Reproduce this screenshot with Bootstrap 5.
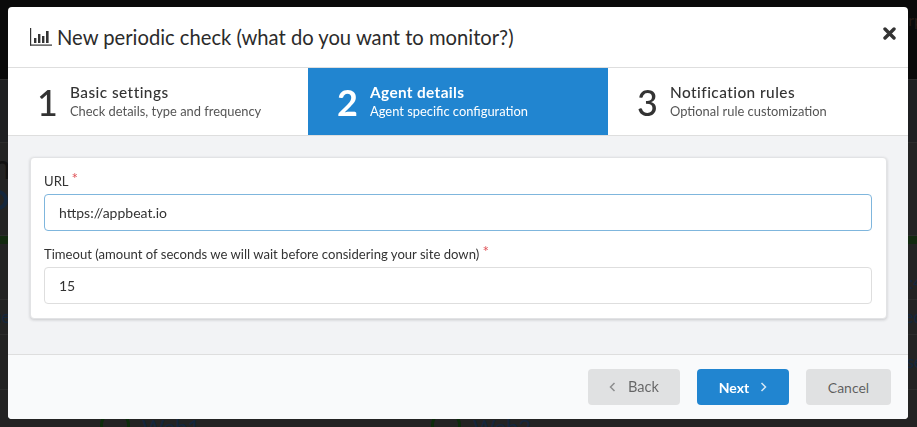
<!DOCTYPE html>
<html lang="en">
<head>
  <meta charset="UTF-8" />
  <meta name="viewport" content="width=device-width, initial-scale=1" />
  <title>New periodic check</title>
  <link href="https://cdn.jsdelivr.net/npm/bootstrap@5.3.0/dist/css/bootstrap.min.css" rel="stylesheet" />
  <style>
    html, body {
      height: 100%;
      overflow: hidden;
    }
    body {
      background-color: #232323;
      font-family: Lato, "Liberation Sans", sans-serif;
      color: #333;
    }
    /* dimmed page behind the dialog */
    .bg-page {
      height: 427px;
      overflow: hidden;
      color: #14263c;
    }
    .bg-band {
      display: flex;
      justify-content: space-between;
      align-items: center;
      border-bottom: 1px solid #2c2c2c;
      overflow: hidden;
      white-space: nowrap;
      font-size: 17px;
    }
    .bg-band span:first-child { margin-left: -8px; }
    .bg-band span:last-child { margin-right: -6px; }
    .bg-top { height: 80px; background: #0a0a0a; color: #241a16; align-items: flex-start; padding-top: 8px; justify-content: flex-end; font-size: 16px; }
    .bg-sub { height: 63px; background: #1f2022; }
    .bg-title { height: 93px; flex-direction: column; align-items: flex-start; justify-content: flex-start; }
    .bg-title span { font-size: 34px; line-height: 46px; color: #111; margin-left: -10px; }
    .bg-arc { width: 20px; height: 20px; border: 4px solid #14263c; border-radius: 50%; margin: 1px 0 0 -12px; }
    .bg-green { height: 8px; background: #12290f; border: 0; }
    .bg-a { height: 56px; align-items: flex-end; padding-bottom: 4px; }
    .bg-b { height: 35px; }
    .bg-c { height: 55px; justify-content: flex-end; }
    .bg-hosts { justify-content: flex-start; align-items: flex-start; padding: 20px 0 0 100px; font-size: 22px; border: 0; }
    .bg-hosts span:first-child { margin-left: 0; }
    .bg-hosts span:last-child { margin-right: 0; }
    .bg-host { display: flex; gap: 12px; width: 331px; }
    .bg-ring { width: 30px; height: 30px; border: 3px solid #0d2c0b; border-radius: 50%; flex: none; }

    /* dialog */
    .check-modal {
      position: fixed;
      top: 7px;
      left: 8px;
      width: 900px;
      height: 412px;
      display: flex;
      flex-direction: column;
      background: #fff;
      border-radius: 4px;
      overflow: hidden;
    }
    .check-head {
      height: 61px;
      flex: none;
      display: flex;
      align-items: center;
      justify-content: space-between;
      padding: 0 12px 0 21px;
      border-bottom: 1px solid #dedede;
    }
    .check-title {
      display: flex;
      align-items: center;
      gap: 4px;
      margin: 0;
      font-size: 20.2px;
      font-weight: 400;
      color: #2b2b2b;
      line-height: 1;
    }
    .check-close {
      border: 0;
      background: none;
      padding: 0;
      margin-top: -8px;
      line-height: 0;
    }
    .steps {
      height: 68px;
      flex: none;
      display: flex;
      border-bottom: 1px solid #dedede;
    }
    .step-item {
      width: 300px;
      display: flex;
      align-items: center;
      gap: 13px;
      padding-left: 29px;
      color: #333;
    }
    .step-item + .step-item { border-left: 1px solid #dedede; }
    .step-item.is-active {
      background: #2185d0;
      color: #fff;
      border-left-color: #2185d0;
    }
    .step-item.is-active + .step-item { border-left: 0; }
    .step-num {
      font-size: 36px;
      line-height: 1;
      width: 20px;
      text-align: center;
      font-weight: 500;
    }
    .step-name {
      font-size: 15.4px;
      line-height: 19px;
      font-weight: 500;
      letter-spacing: .45px;
    }
    .step-desc {
      font-size: 12.9px;
      line-height: 18px;
      color: #555;
    }
    .is-active .step-num { font-weight: 700; margin-left: -1px; margin-right: 1px; }
    .is-active .step-name { font-weight: 700; letter-spacing: .35px; margin-left: -1px; }
    .is-active .step-desc { color: #fff; margin-left: -1px; }
    .check-body {
      flex: 1;
      background: #f2f3f5;
      padding: 21px 21px 0 22px;
    }
    .check-card {
      height: 162px;
      background: #fff;
      border: 1px solid #e2e3e5;
      border-radius: 4px;
      box-shadow: 0 1px 3px rgba(34,36,38,.2);
      padding: 15px 14px 0 13px;
    }
    .check-label {
      display: block;
      font-size: 13.1px;
      line-height: 17px;
      margin-bottom: 4px;
      color: #333;
    }
    .req {
      color: #e0555a;
      font-size: 15.5px;
      vertical-align: top;
      line-height: 11px;
    }
    .check-input {
      height: 37px;
      padding: 0 14px;
      font-size: 14px;
      font-family: inherit;
      color: #333;
      border: 1px solid #dedede;
      border-radius: 4px;
      box-shadow: none;
      margin-bottom: 15px;
    }
    .check-input.is-focus { border-color: #7fb6dd; }
    .check-foot {
      height: 65px;
      flex: none;
      display: flex;
      justify-content: flex-end;
      align-items: center;
      gap: 17px;
      padding: 0 17px 0 0;
      background: #f9fafb;
      border-top: 1px solid #dedede;
    }
    .foot-btn {
      height: 36px;
      display: flex;
      align-items: center;
      justify-content: center;
      gap: 10px;
      padding: 0;
      border: 0;
      border-radius: 4px;
      font-size: 14px;
      font-weight: 700;
      font-family: inherit;
    }
    .foot-back { width: 92px; background: #e0e1e2; color: rgba(0,0,0,.55); font-weight: 400; font-size: 14.6px; gap: 12px; }
    .foot-next { width: 92px; background: #2185d0; color: #fff; gap: 11px; }
    .foot-cancel { width: 85px; background: #e0e1e2; color: rgba(0,0,0,.6); font-weight: 400; }
  </style>
</head>
<body>

  <div class="bg-page" aria-hidden="true">
    <div class="bg-band bg-top"><span>rp</span></div>
    <div class="bg-band bg-sub"></div>
    <div class="bg-band bg-title"><span>nt</span><div class="bg-arc"></div></div>
    <div class="bg-band bg-green"></div>
    <div class="bg-band bg-a"><span></span><span>2:4</span></div>
    <div class="bg-band bg-b"><span>ue</span><span>ed</span></div>
    <div class="bg-band bg-c"><span>se</span></div>
    <div class="bg-band bg-hosts">
      <div class="bg-host"><div class="bg-ring"></div><span>Web1</span></div>
      <div class="bg-host"><div class="bg-ring"></div><span>Web2</span></div>
    </div>
  </div>

  <div class="check-modal">
    <div class="check-head">
      <h5 class="check-title">
        <svg width="24" height="18" viewBox="0 0 24 18" fill="#333">
          <rect x="1" y="0" width="1.2" height="17.5"/>
          <rect x="1" y="16.5" width="22" height="1.2"/>
          <rect x="5" y="10" width="2.4" height="5"/>
          <rect x="9" y="6" width="2.4" height="9"/>
          <rect x="13" y="8" width="2.4" height="7"/>
          <rect x="17" y="3" width="2.6" height="12"/>
        </svg>
        New periodic check (what do you want to monitor?)
      </h5>
      <button class="check-close" type="button" aria-label="Close">
        <svg width="13" height="13" viewBox="0 0 13 13" stroke="#333" stroke-width="3.4" stroke-linecap="round">
          <path d="M2 2 11 11M11 2 2 11"/>
        </svg>
      </button>
    </div>

    <div class="steps">
      <div class="step-item">
        <div class="step-num">1</div>
        <div>
          <div class="step-name">Basic settings</div>
          <div class="step-desc">Check details, type and frequency</div>
        </div>
      </div>
      <div class="step-item is-active">
        <div class="step-num">2</div>
        <div>
          <div class="step-name">Agent details</div>
          <div class="step-desc">Agent specific configuration</div>
        </div>
      </div>
      <div class="step-item">
        <div class="step-num">3</div>
        <div>
          <div class="step-name">Notification rules</div>
          <div class="step-desc">Optional rule customization</div>
        </div>
      </div>
    </div>

    <div class="check-body">
      <div class="check-card">
        <label class="check-label">URL <span class="req">*</span></label>
        <input class="form-control check-input is-focus" type="text" value="https://appbeat.io" />
        <label class="check-label">Timeout (amount of seconds we will wait before considering your site down) <span class="req">*</span></label>
        <input class="form-control check-input" type="text" value="15" />
      </div>
    </div>

    <div class="check-foot">
      <button class="btn foot-btn foot-back" type="button">
        <svg width="7" height="10" viewBox="0 0 7 10" fill="none" stroke="#8c8d8e" stroke-width="1.5"><path d="M5.5 1 1.5 5l4 4"/></svg>
        Back
      </button>
      <button class="btn foot-btn foot-next" type="button">
        Next
        <svg width="7" height="10" viewBox="0 0 7 10" fill="none" stroke="#d5e7f5" stroke-width="1.5"><path d="M1.5 1l4 4-4 4"/></svg>
      </button>
      <button class="btn foot-btn foot-cancel" type="button">Cancel</button>
    </div>
  </div>

  <script src="https://cdn.jsdelivr.net/npm/bootstrap@5.3.0/dist/js/bootstrap.bundle.min.js"></script>
</body>
</html>
